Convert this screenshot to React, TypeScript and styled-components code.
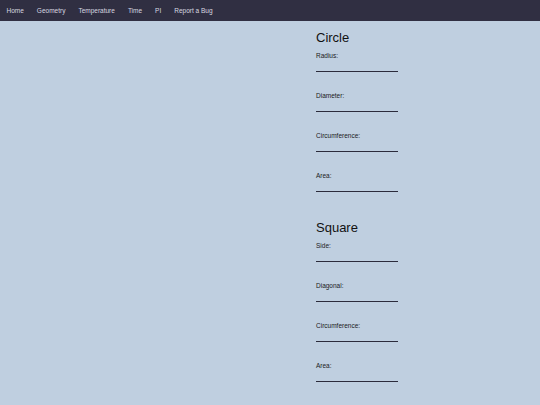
import React from 'react';
import styled, { createGlobalStyle } from 'styled-components';

const GlobalStyle = createGlobalStyle`
  html, body {
    margin: 0;
    padding: 0;
    background-color: #bfcfe0;
    font-family: "Liberation Sans", Arial, sans-serif;
  }
`;

const NavBar = styled.nav`
  display: flex;
  align-items: center;
  height: 21px;
  background-color: #302f42;
`;

const NavLink = styled.a`
  padding: 0 6.5px;
  font-size: 6.5px;
  color: #d8d8e0;
  text-decoration: none;
  cursor: pointer;
`;

const Page = styled.main`
  display: grid;
  grid-template-columns: 316px 1fr;
`;

const Column = styled.div`
  display: flex;
  flex-direction: column;
`;

const Section = styled.section`
  display: flex;
  flex-direction: column;
`;

const Heading = styled.h2`
  margin: 9px 0 6.5px;
  font-size: 13px;
  line-height: 15px;
  font-weight: 400;
  color: #111111;
`;

const Field = styled.div`
  display: flex;
  flex-direction: column;
  margin-bottom: 20px;

  &:last-child {
    margin-bottom: 19.5px;
  }
`;

const Label = styled.label`
  font-size: 6.5px;
  line-height: 8px;
  color: #1a1a1a;
`;

const Input = styled.input`
  box-sizing: border-box;
  width: 82px;
  height: 12px;
  padding: 0;
  border: none;
  border-bottom: 1.5px solid #2b2b3b;
  background: transparent;
  outline: none;
  font-size: 6.5px;
`;

const shapes = [
  { title: 'Circle', fields: ['Radius', 'Diameter', 'Circumference', 'Area'] },
  { title: 'Square', fields: ['Side', 'Diagonal', 'Circumference', 'Area'] },
];

const navItems = ['Home', 'Geometry', 'Temperature', 'Time', 'PI', 'Report a Bug'];

const App: React.FC = () => {
  return (
    <>
      <GlobalStyle />
      <NavBar>
        {navItems.map((item) => (
          <NavLink key={item}>{item}</NavLink>
        ))}
      </NavBar>
      <Page>
        <div />
        <Column>
          {shapes.map((shape) => (
            <Section key={shape.title}>
              <Heading>{shape.title}</Heading>
              {shape.fields.map((field) => (
                <Field key={field}>
                  <Label>{field}:</Label>
                  <Input type="text" />
                </Field>
              ))}
            </Section>
          ))}
        </Column>
      </Page>
    </>
  );
};

export default App;
